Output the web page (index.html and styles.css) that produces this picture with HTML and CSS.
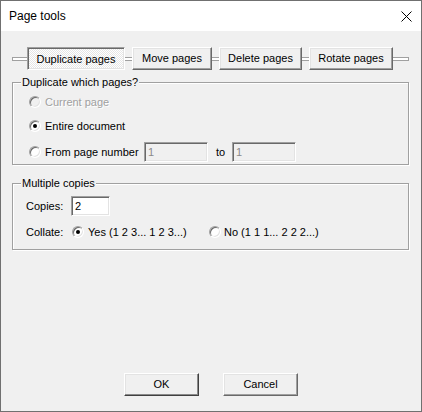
FILE: index.html
```html
<!DOCTYPE html>
<html>
<head>
<meta charset="utf-8">
<title>Page tools</title>
<link rel="stylesheet" href="styles.css">
</head>
<body>
<div class="window">
  <div class="titlebar">
    <span class="title">Page tools</span>
    <svg class="close" width="11" height="11" viewBox="0 0 11 11"><path d="M0.5 0.5 L10.5 10.5 M10.5 0.5 L0.5 10.5" stroke="#000" stroke-width="1" fill="none"/></svg>
  </div>
  <div class="body">
    <div class="tabs">
      <span class="rail rail-start"></span>
      <div class="btn tab tab-dup active">Duplicate pages</div>
      <span class="rail rail-mid1"></span>
      <div class="btn tab tab-move">Move pages</div>
      <span class="rail rail-mid"></span>
      <div class="btn tab tab-del">Delete pages</div>
      <span class="rail rail-mid"></span>
      <div class="btn tab tab-rot">Rotate pages</div>
      <span class="rail rail-end"></span>
    </div>

    <div class="group group-which">
      <span class="legend">Duplicate which pages?</span>
      <div class="row row-a">
        <span class="radio radio-disabled"></span>
        <span class="opt-label text-disabled">Current page</span>
      </div>
      <div class="row row-b">
        <span class="radio checked"></span>
        <span class="opt-label">Entire document</span>
      </div>
      <div class="row row-c">
        <span class="radio"></span>
        <span class="opt-label from-label">From page number</span>
        <span class="field field-disabled field-page">1</span>
        <span class="to-label">to</span>
        <span class="field field-disabled field-page">1</span>
      </div>
    </div>

    <div class="group group-copies">
      <span class="legend">Multiple copies</span>
      <div class="row row-copies">
        <span class="field-label">Copies:</span>
        <span class="field field-copies">2</span>
      </div>
      <div class="row row-collate">
        <span class="field-label collate-label">Collate:</span>
        <div class="option option-yes">
          <span class="radio checked"></span>
          <span class="opt-label">Yes (1 2 3... 1 2 3...)</span>
        </div>
        <div class="option option-no">
          <span class="radio"></span>
          <span class="opt-label opt-no">No (1 1 1... 2 2 2...)</span>
        </div>
      </div>
    </div>

    <div class="actions">
      <div class="btn action default">OK</div>
      <div class="btn action">Cancel</div>
    </div>
  </div>
</div>
</body>
</html>
```

FILE: styles.css
```css
* { box-sizing: border-box; }

html, body {
  margin: 0;
  padding: 0;
}

body {
  font-family: "Liberation Sans", Arial, sans-serif;
  font-size: 11px;
  color: #000;
  background: #f0f0f0;
}

.window {
  width: 422px;
  height: 412px;
  border: 1px solid #707070;
  display: flex;
  flex-direction: column;
  background: #f0f0f0;
}

.titlebar {
  height: 30px;
  background: #fff;
  display: flex;
  align-items: center;
  justify-content: space-between;
  padding: 0 9px 0 8px;
  flex: none;
}

.title {
  font-size: 12px;
  line-height: 30px;
  color: #000;
}

.close {
  display: block;
  margin-top: 1px;
}

.body {
  flex: 1;
  display: flex;
  flex-direction: column;
  padding: 16px 0 15px 11px;
}

/* tab strip */
.tabs {
  display: flex;
  align-items: center;
  height: 23px;
}

.rail {
  display: block;
  height: 4px;
  background: #fff;
  border-top: 1px solid #a0a0a0;
  border-bottom: 1px solid #a0a0a0;
}
.rail-start { width: 15px; border-left: 1px solid #a0a0a0; }
.rail-mid1 { width: 7px; }
.rail-mid { width: 7px; }
.rail-end { width: 16px; border-right: 1px solid #a0a0a0; }

.btn {
  display: flex;
  align-items: center;
  justify-content: center;
  height: 23px;
  background: #f0f0f0;
  border: 1px solid;
  border-color: #fff #696969 #696969 #fff;
  box-shadow: inset -1px -1px 0 #a0a0a0, inset 1px 1px 0 #e3e3e3;
  white-space: nowrap;
  line-height: 13px;
  padding-bottom: 1px;
}

.tab-dup { width: 98px; }
.tab-move { width: 80px; }
.tab-del { width: 83px; }
.tab-rot { width: 84px; }

.tab.active {
  border-color: #a0a0a0 #fff #fff #a0a0a0;
  box-shadow: inset 1px 1px 0 #696969, inset -1px -1px 0 #e3e3e3;
  background: repeating-conic-gradient(#ffffff 0 25%, #e6e6e6 0 50%) 0 0 / 2px 2px;
  padding-top: 1px;
  padding-bottom: 0;
}

/* group boxes */
.group {
  position: relative;
  width: 397px;
  border: 1px solid #a0a0a0;
  box-shadow: 1px 1px 0 #fff, inset 1px 1px 0 #fff;
}

.legend {
  position: absolute;
  top: -7px;
  left: 8px;
  padding: 0 1px;
  line-height: 13px;
  background: #f0f0f0;
}

.group-which {
  margin-top: 12px;
  padding: 9px 0 2px 16px;
}

.group-copies {
  margin-top: 18px;
  padding: 12px 0 7px 13px;
}

.row {
  display: flex;
  align-items: center;
  height: 20px;
}

.row-b { margin-top: 4px; }
.row-c { margin-top: 6px; }
.row-collate { margin-top: 6px; }

.opt-label {
  line-height: 13px;
  margin-left: 4px;
  white-space: nowrap;
}

.text-disabled {
  color: #a0a0a0;
  text-shadow: 1px 1px 0 #fff;
}

.from-label {
  width: 99px;
}

.to-label {
  width: 24px;
  padding-left: 8px;
}

/* radio buttons */
.radio {
  position: relative;
  display: block;
  flex: none;
  width: 12px;
  height: 12px;
  border-radius: 50%;
  border: 1px solid;
  border-color: #a0a0a0 #fff #fff #a0a0a0;
  background: #fff;
  box-shadow: inset 1px 1px 0 #696969, inset -1px -1px 0 #e3e3e3;
}

.radio-disabled {
  background: #f0f0f0;
}

.radio.checked::after {
  content: "";
  position: absolute;
  left: 3px;
  top: 3px;
  width: 4px;
  height: 4px;
  border-radius: 50%;
  background: #000;
}

/* text fields */
.field {
  display: flex;
  align-items: center;
  height: 20px;
  padding-left: 3px;
  border: 1px solid;
  border-color: #a0a0a0 #fff #fff #a0a0a0;
  box-shadow: inset 1px 1px 0 #696969, inset -1px -1px 0 #e3e3e3;
  background: #fff;
  line-height: 13px;
}

.field-disabled {
  background: #f0f0f0;
  color: #8a8a8a;
}

.field-page {
  width: 64px;
}

.field-copies {
  width: 39px;
}

.field-label {
  width: 45px;
  line-height: 13px;
}

.collate-label {
  width: 46px;
}

.option {
  display: flex;
  align-items: center;
}

.option-yes {
  width: 137px;
}

.opt-no {
  margin-left: 3px;
}

/* dialog buttons */
.actions {
  margin-top: auto;
  margin-left: -11px;
  display: flex;
  justify-content: center;
  gap: 24px;
}

.action {
  width: 75px;
}

.action.default {
  border-color: #fff #404040 #404040 #fff;
  box-shadow: inset -1px -1px 0 #8a8a8a, inset 1px 1px 0 #e3e3e3;
}
```
